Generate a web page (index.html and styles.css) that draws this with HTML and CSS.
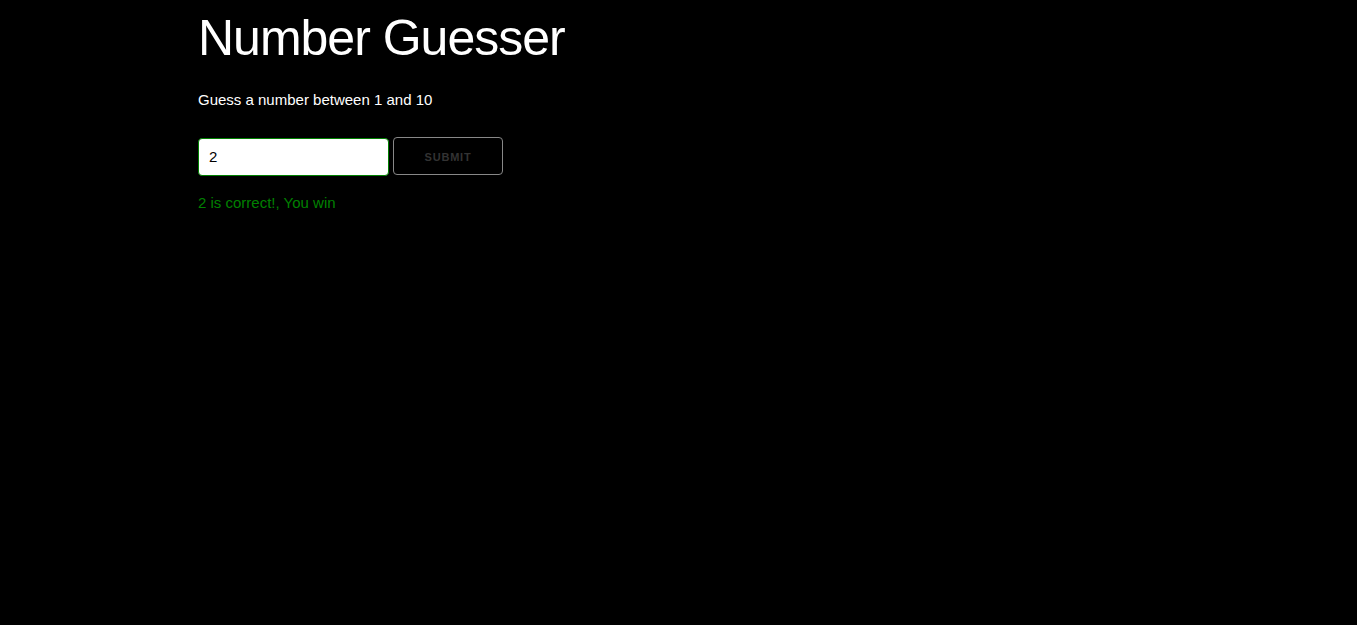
FILE: index.html
```html
<!DOCTYPE html>
<html lang="en">
<head>
<meta charset="utf-8">
<title>Number Guesser</title>
<link rel="stylesheet" href="styles.css">
</head>
<body>
<div class="container">
  <h1 class="title">Number Guesser</h1>
  <p class="intro">Guess a number between 1 and 10</p>
  <form class="guess-form">
    <input class="guess-input" type="number" value="2">
    <button class="submit-btn" type="button" disabled>Submit</button>
  </form>
  <p class="message">2 is correct!, You win</p>
</div>
</body>
</html>
```
FILE: styles.css
```css
html, body {
  margin: 0;
  padding: 0;
  background: #000;
}
body {
  font-family: "Liberation Sans", Arial, sans-serif;
  font-size: 15px;
  line-height: 1.6;
  color: #fff;
}
.container {
  width: 960px;
  margin: 0 auto;
  padding-top: 8px;
  position: relative;
  left: -0.5px;
}
.title {
  font-size: 50px;
  font-weight: 300;
  line-height: 1.2;
  letter-spacing: -1px;
  margin: 0 0 20px 0;
}
.intro {
  margin: 0 0 25px 0;
}
.guess-form {
  display: flex;
  align-items: flex-start;
  gap: 4px;
  margin: 0;
}
.guess-input {
  box-sizing: border-box;
  width: 191px;
  height: 38px;
  margin: 1px 0 15px 0;
  padding: 4px 10px 6px 10px;
  font: inherit;
  color: #000;
  background: #fff;
  border: 1px solid #008000;
  border-radius: 4px;
  outline: none;
  -moz-appearance: textfield;
}
.guess-input::-webkit-outer-spin-button,
.guess-input::-webkit-inner-spin-button {
  -webkit-appearance: none;
  margin: 0;
}
.submit-btn {
  box-sizing: border-box;
  height: 38px;
  width: 110px;
  padding: 0 20px;
  margin: 0;
  font-family: "Liberation Sans", Arial, sans-serif;
  font-size: 11px;
  font-weight: 700;
  line-height: 38px;
  letter-spacing: 0.8px;
  text-transform: uppercase;
  color: #333;
  background: transparent;
  border: 1px solid #888;
  border-radius: 4px;
}
.message {
  margin: 0;
  color: #008000;
}
```
